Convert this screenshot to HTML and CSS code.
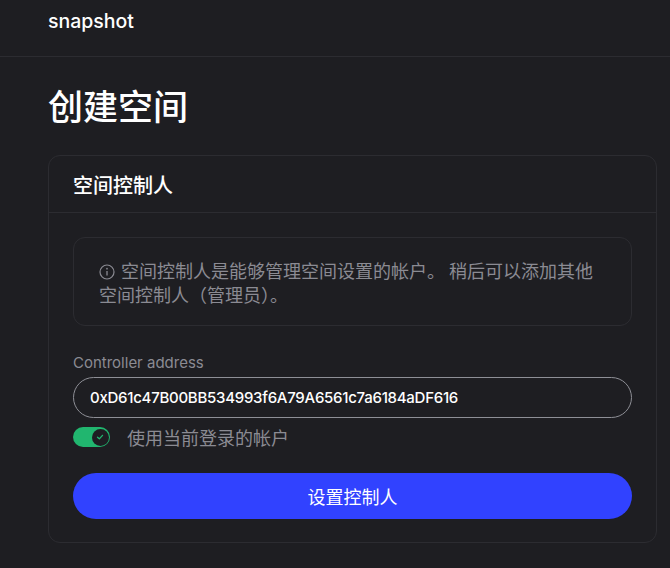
FILE: index.html
```html
<!DOCTYPE html>
<html lang="zh">
<head>
<meta charset="utf-8">
<link rel="stylesheet" href="styles.css">
</head>
<body>
<header class="topbar">
  <div class="brand">snapshot</div>
</header>
<main class="page">
  <h1 class="title">创建空间</h1>
  <section class="card">
    <div class="card-head">空间控制人</div>
    <div class="card-body">
      <div class="info">
        <p><svg class="info-icon" viewBox="0 0 16 16" width="16" height="16"><circle cx="8" cy="8" r="7" fill="none" stroke="currentColor" stroke-width="1.2"/><line x1="8" y1="7" x2="8" y2="11.5" stroke="currentColor" stroke-width="1.3"/><circle cx="8" cy="4.7" r="0.85" fill="currentColor"/></svg> 空间控制人是能够管理空间设置的帐户。 稍后可以添加其他空间控制人（管理员）。</p>
      </div>
      <label class="field-label">Controller address</label>
      <div class="input">0xD61c47B00BB534993f6A79A6561c7a6184aDF616</div>
      <div class="toggle-row">
        <span class="toggle"><span class="knob"><svg viewBox="0 0 12 12" width="10" height="10"><path d="M3 6.2 L5.2 8.2 L9 4" fill="none" stroke="#21b66f" stroke-width="1.6" stroke-linecap="round" stroke-linejoin="round"/></svg></span></span>
        <span class="toggle-text">使用当前登录的帐户</span>
      </div>
      <button class="primary">设置控制人</button>
    </div>
  </section>
</main>
</body>
</html>
```
FILE: styles.css
```css
* { box-sizing: border-box; }
html, body { margin: 0; padding: 0; }
body {
  background: #1e1e22;
  color: #ffffff;
  font-family: Inter, "Noto Sans CJK SC", sans-serif;
  width: 670px;
  height: 568px;
  overflow: hidden;
}
.topbar {
  height: 57px;
  border-bottom: 1px solid #2c2c31;
  padding: 0 48px;
}
.brand {
  font-size: 19.5px;
  font-weight: 500;
  line-height: 20px;
  padding-top: 11px;
}
.page {
  padding: 0 13px 0 48px;
}
.title {
  margin: 0;
  padding-top: 24px;
  font-size: 35px;
  font-weight: 500;
  line-height: 48px;
  height: 98px;
  font-family: "Noto Sans CJK SC", sans-serif;
}
.card {
  border: 1px solid #2c2c31;
  border-radius: 12px;
}
.card-head {
  height: 57px;
  border-bottom: 1px solid #2c2c31;
  padding: 0 24px;
  display: flex;
  align-items: center;
  font-size: 20px;
  font-weight: 500;
  font-family: "Noto Sans CJK SC", sans-serif;
}
.card-body {
  padding: 24px 24px 23px;
  display: flex;
  flex-direction: column;
}
.info {
  border: 1px solid #2c2c31;
  border-radius: 12px;
  padding: 20px 32px 19px 25px;
  color: #8b8b93;
  font-size: 18px;
  line-height: 24px;
  font-family: "Noto Sans CJK SC", sans-serif;
}
.info p { margin: 0; }
.info-icon { vertical-align: -2px; margin-right: 2px; }
.field-label {
  margin-top: 27px;
  color: #8b8b93;
  font-size: 15px;
  line-height: 20px;
}
.input {
  margin-top: 4px;
  height: 41px;
  border: 1px solid #8e8f96;
  border-radius: 21px;
  padding: 0 16px;
  display: flex;
  align-items: center;
  font-size: 15px;
  font-weight: 500;
  letter-spacing: -0.27px;
  color: #ffffff;
}
.toggle-row {
  margin-top: 9px;
  display: flex;
  align-items: center;
  gap: 17px;
  height: 20px;
}
.toggle {
  width: 37px;
  height: 20px;
  border-radius: 10px;
  background: #21b66f;
  display: flex;
  align-items: center;
  justify-content: flex-end;
  padding-right: 1.5px;
}
.knob {
  width: 17px;
  height: 17px;
  border-radius: 50%;
  background: #1e1e22;
  display: flex;
  align-items: center;
  justify-content: center;
}
.knob svg { display: block; }
.toggle-text {
  color: #8b8b93;
  font-size: 18px;
  font-family: "Noto Sans CJK SC", sans-serif;
}
.primary {
  margin-top: 26px;
  height: 46px;
  border: none;
  border-radius: 23px;
  background: #3142ff;
  color: #ffffff;
  font-size: 18px;
  font-family: "Noto Sans CJK SC", sans-serif;
  width: 100%;
}
```
